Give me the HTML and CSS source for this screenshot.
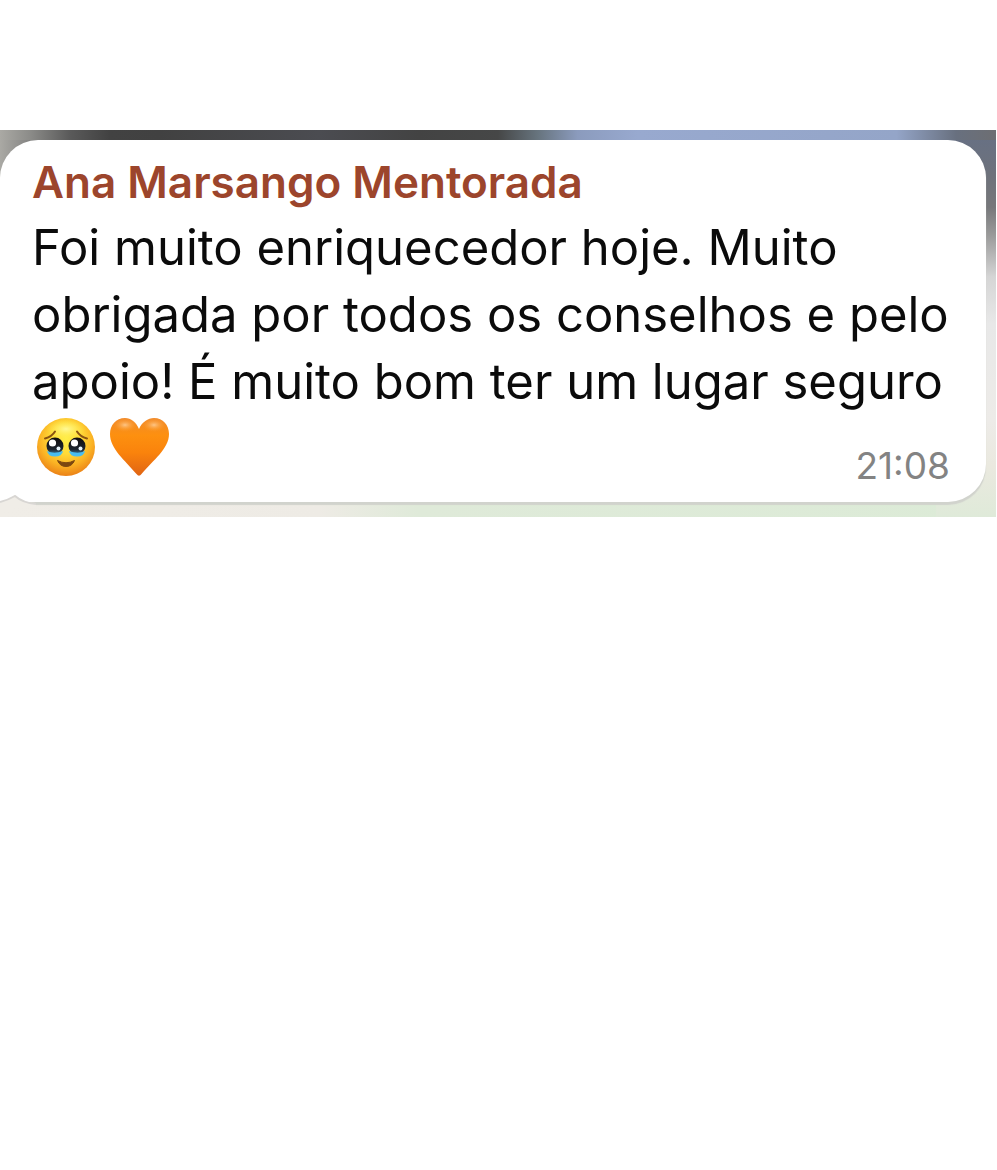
FILE: index.html
```html
<!DOCTYPE html>
<html lang="pt-BR">
<head>
  <meta charset="UTF-8">
  <meta name="viewport" content="width=device-width, initial-scale=1">
  <title>Mensagem</title>
  <link rel="stylesheet" href="styles.css">
</head>
<body>
<main class="chat">
  <article class="bubble">
    <h1 class="author">Ana Marsango Mentorada</h1>
    <p class="text">Foi muito enriquecedor hoje. Muito<br>obrigada por todos os conselhos e pelo<br>apoio! É muito bom ter um lugar seguro</p>
    <footer class="bottom">
      <div class="emojis">
        <svg class="emoji" viewBox="0 0 60 60" role="img" aria-label="Rosto segurando as lágrimas">
          <defs>
            <radialGradient id="face" cx="50%" cy="36%" r="65%">
              <stop offset="0" stop-color="#ffee48"/>
              <stop offset=".4" stop-color="#ffda38"/>
              <stop offset=".7" stop-color="#fbb324"/>
              <stop offset="1" stop-color="#ea7f16"/>
            </radialGradient>
            <radialGradient id="shine">
              <stop offset="0" stop-color="#fffba0" stop-opacity=".9"/>
              <stop offset="1" stop-color="#fff04f" stop-opacity="0"/>
            </radialGradient>
            <linearGradient id="eye" x1="0" y1="0" x2="0" y2="1">
              <stop offset="0" stop-color="#100c0c"/>
              <stop offset=".7" stop-color="#1d2530"/>
              <stop offset="1" stop-color="#3c7fa6"/>
            </linearGradient>
          </defs>
          <circle cx="30" cy="30" r="29" fill="url(#face)"/>
          <ellipse cx="30" cy="12" rx="20" ry="10" fill="url(#shine)"/>
          <path d="M9 21.500Q16 19.500 19 14.500M51 21.500Q44 19.500 41 14.500" fill="none" stroke="#8a5311" stroke-width="2" stroke-linecap="round"/>
          <circle cx="19" cy="29" r="8.500" fill="url(#eye)"/>
          <circle cx="41" cy="29" r="8.500" fill="url(#eye)"/>
          <path d="M11 34Q18 37.500 27 34Q26 39.500 19 39.500Q12 39.500 11 34ZM33 34Q42 37.500 49 34Q48 39.500 41 39.500Q34 39.500 33 34Z" fill="#49bdf0"/>
          <circle cx="16.500" cy="26" r="3.600" fill="#fff"/>
          <circle cx="38.500" cy="26" r="3.600" fill="#fff"/>
          <circle cx="22.500" cy="31.500" r="2" fill="#e6f3fa"/>
          <circle cx="44.500" cy="31.500" r="2" fill="#e6f3fa"/>
          <path d="M21.500 43.500Q30 48 38.500 43.500Q36 49.500 30 49.500Q24 49.500 21.500 43.500Z" fill="#7b4710" stroke="#7b4710" stroke-linejoin="round"/>
        </svg>
        <svg class="emoji" viewBox="0 0 60 60" role="img" aria-label="Coração laranja">
          <defs>
            <linearGradient id="heart" x1="0" y1="0" x2="0" y2="1">
              <stop offset="0" stop-color="#f18a2c"/>
              <stop offset=".3" stop-color="#fd900f"/>
              <stop offset=".6" stop-color="#fa830c"/>
              <stop offset="1" stop-color="#e06414"/>
            </linearGradient>
            <radialGradient id="gloss">
              <stop offset="0" stop-color="#ffd3a0" stop-opacity=".8"/>
              <stop offset="1" stop-color="#ff9a20" stop-opacity="0"/>
            </radialGradient>
          </defs>
          <path d="M30 12C27 5 22 1 16 1C7 1 1 8 1 17C1 32 16 43 27.500 57Q30 60.500 32.500 57C44 43 60 32 60 17C60 8 54 1 45 1C39 1 33 5 30 12Z" fill="url(#heart)"/>
          <ellipse cx="16" cy="8" rx="12" ry="7" fill="url(#gloss)"/>
          <ellipse cx="45" cy="8" rx="12" ry="7" fill="url(#gloss)"/>
        </svg>
      </div>
      <time class="time" datetime="21:08">21:08</time>
    </footer>
    <svg class="tail" viewBox="0 0 36 12" aria-hidden="true">
      <path d="M0 7Q8 5 15 0Q23 8 36 8V12H0Z" fill="#f0ede7"/>
      <path d="M0 7Q8 5 15 1Q23 8 36 9" fill="none" stroke="#d8d6d3" stroke-width="2"/>
    </svg>
  </article>
</main>
</body>
</html>
```

FILE: styles.css
```css
* {
    box-sizing: border-box;
}
body {
    margin: 0;
    background: #fff;
    font-family: Inter, sans-serif;
}
.chat {
    margin: 130px 1px 0 0;
    padding: 10px 10px 15px 0;
    /* wallpaper: top strip, top left corner, right edge, bottom strip */
    background:
        linear-gradient(90deg, #aaa9a4 0, #8c8c89 3%, #5a5a5a 7%, #424242 11%, #414141 16%, #4b4c51 32%, #434343 42%, #464747 50%, #67747e 54%, #8b9bbd 58%, #98a9cf 64%, #94a5c8 90%, #68707f 96%, #6d6e72 100%) top / 100% 10px no-repeat,
        linear-gradient(90deg, #aaa9a4, #777 40px) left top / 40px 50px no-repeat,
        linear-gradient(180deg, #667085 0, #6e727b 12%, #77787b 20%, #999 27%, #d5d5d5 38%, #e8e8e8 50%, #edebe8 75%, #eae9df 87%, #dfead9 100%) right top / 60px 100% no-repeat,
        linear-gradient(90deg, #f0ede7 0, #eeebe5 32%, #dfead9 42%, #dcebd7 100%);
}
.bubble {
    position: relative;
    padding: 14px 36px 18px 32px;
    background: #fff;
    border-radius: 38px 38px 38px 0;
    box-shadow: 0 3px 1px #d1d3cd;
}
.author {
    margin: 0 0 3px;
    color: #9c452c;
    font-size: 44px;
    font-weight: 600;
    line-height: 57px;
}
.text {
    margin: 0;
    color: #0b0b0b;
    font-size: 49px;
    line-height: 67px;
    white-space: nowrap;
}
.bottom {
    display: flex;
    justify-content: space-between;
    align-items: flex-end;
}
.emojis {
    display: flex;
    gap: 13px;
    padding: 2px 0 7px 4px;
}
.emoji {
    width: 60px;
    height: 60px;
}
.time {
    color: #838383;
    font-size: 37px;
    line-height: 36px;
}
.tail {
    position: absolute;
    left: 0;
    bottom: -5px;
    width: 36px;
    height: 12px;
}
```
